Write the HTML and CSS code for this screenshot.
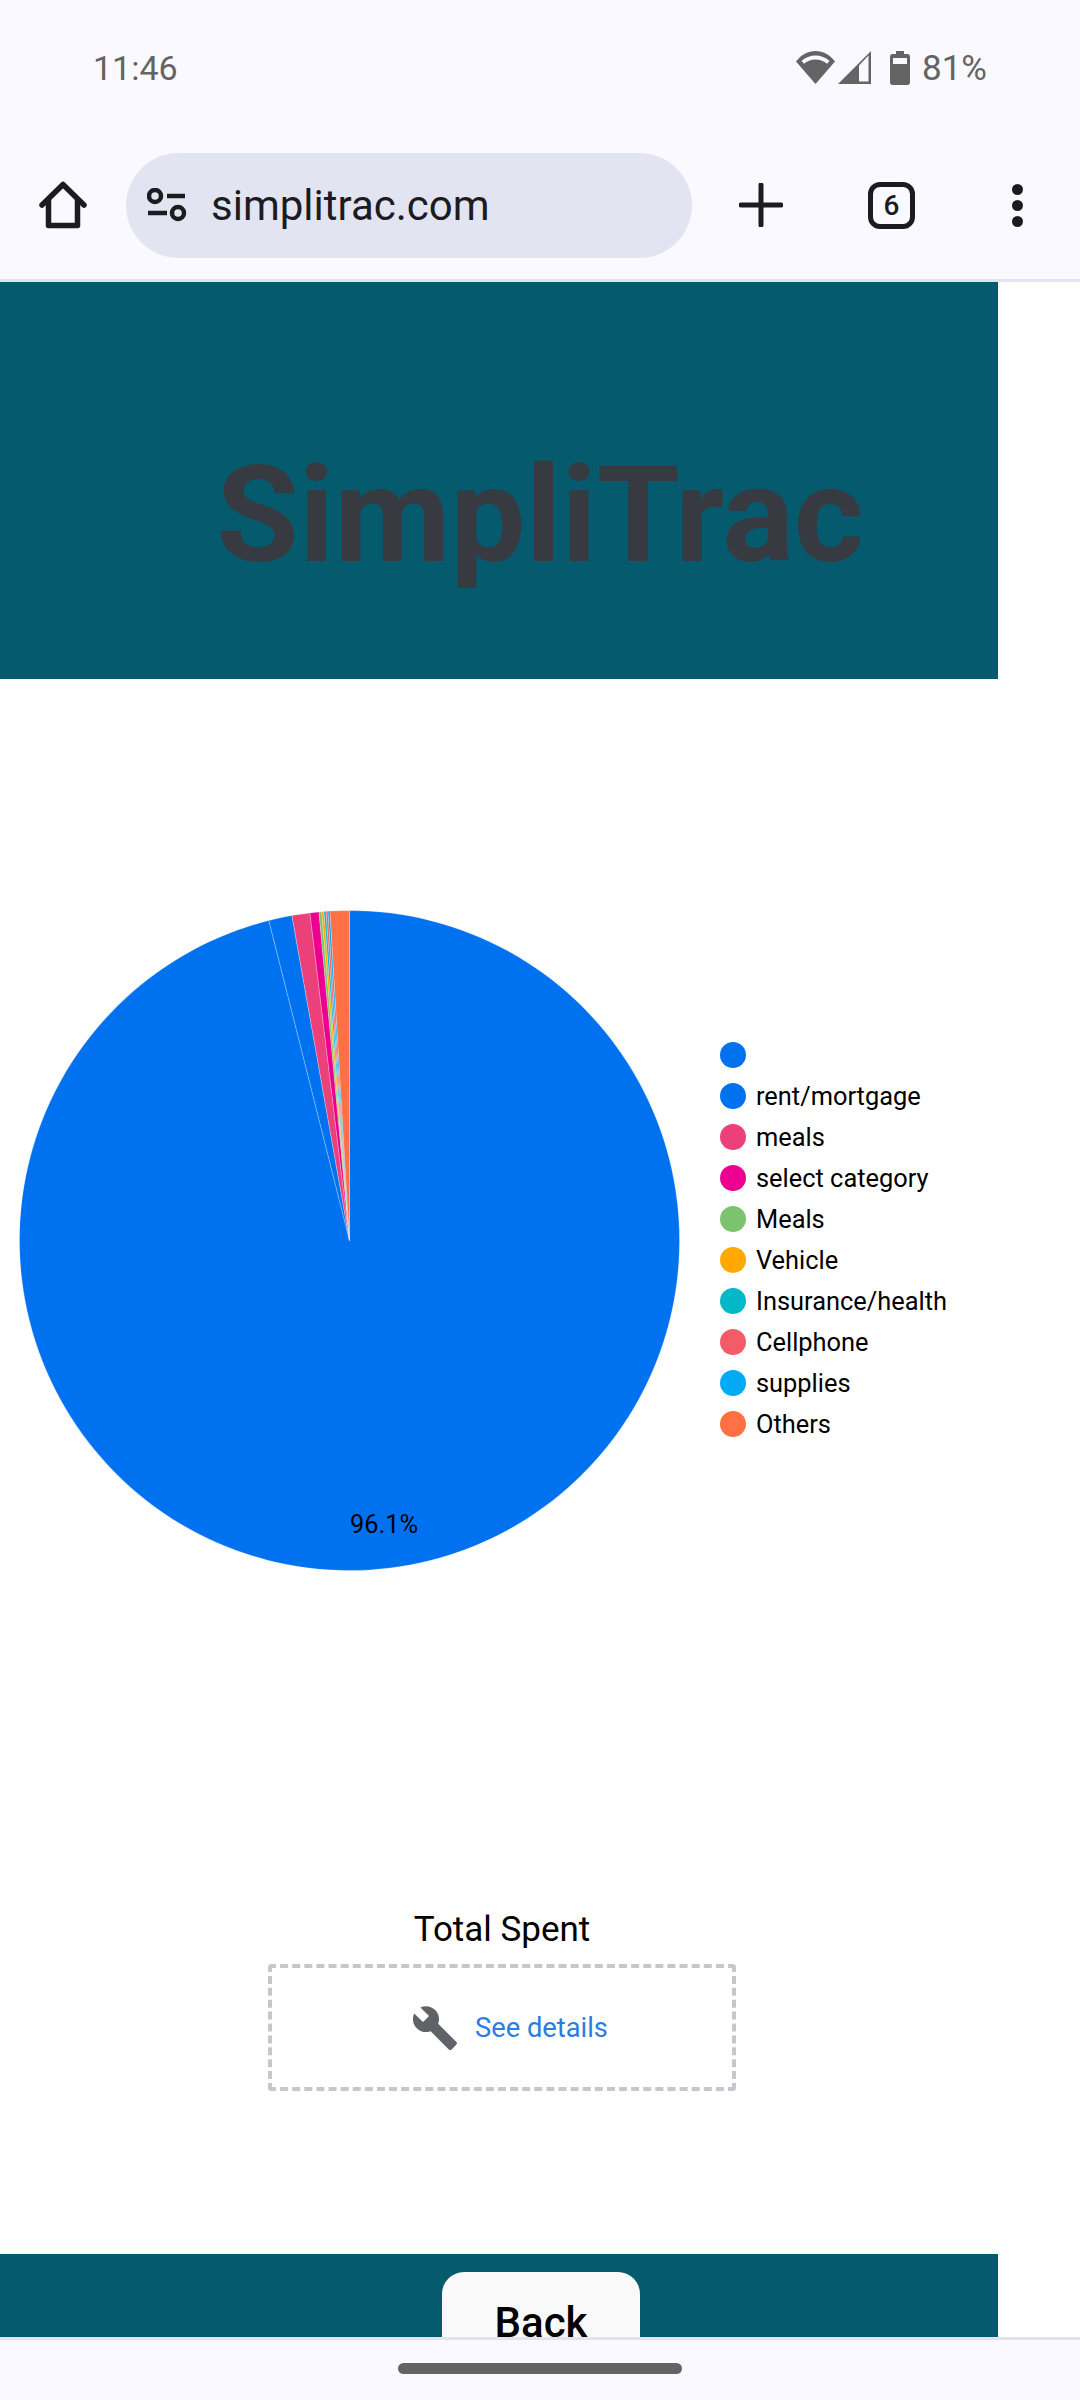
FILE: index.html
```html
<!DOCTYPE html>
<html lang="en">
<head>
    <meta charset="UTF-8">
    <meta name="viewport" content="width=device-width, initial-scale=1.0">
    <title>SimpliTrac</title>
    <link rel="stylesheet" href="styles.css">
</head>
<body>
    <div class="status-bar">
        <span class="clock">11:46</span>
        <div class="status-icons">
            <svg class="icon-wifi" viewBox="0 0 39 33" width="39" height="33">
                <path d="M19.5 33 0 10.5C5 4 12 0 19.5 0S34 4 39 10.5Z" fill="#646464"/>
                <path d="M5.5 10C9.5 6.6 14.3 4.6 19.5 4.6S29.500 6.600 33.500 10L31 12.800C28 10.200 24 8.500 19.500 8.500S11 10.200 8 12.800Z" fill="#f9f9ff"/>
            </svg>
            <svg class="icon-signal" viewBox="0 0 33 33" width="33" height="33">
                <path d="M33 0V33H0Z" fill="#646464"/>
                <path d="M21 14.500 30.500 4.500V30.500H21Z" fill="#f9f9ff"/>
            </svg>
            <svg class="icon-battery" viewBox="0 0 20 34" width="20" height="34">
                <path d="M6 0H14V3H17.500C19 3 20 4 20 5.500V31.500C20 33 19 34 17.500 34H2.500C1 34 0 33 0 31.500V5.500C0 4 1 3 2.500 3H6Z" fill="#646464"/>
                <rect x="3" y="7" width="14" height="6" fill="#f9f9ff"/>
            </svg>
            <span class="battery-level">81%</span>
        </div>
    </div>

    <div class="toolbar">
        <svg class="icon-home" viewBox="0 0 48 48" width="48" height="48" fill="none" stroke="#1c1b1f" stroke-width="5.500" stroke-linejoin="round" stroke-linecap="round">
            <path d="M3 24 24 3.500 45 24"/>
            <path d="M9.500 19V44.500H38.500V19"/>
        </svg>
        <div class="address-bar">
            <svg class="icon-tune" viewBox="0 0 40 34" width="40" height="34" fill="none" stroke="#1c1b1f" stroke-width="4.500">
                <circle cx="8" cy="8" r="6"/>
                <path d="M20 8H38"/>
                <path d="M1 25H20"/>
                <circle cx="31" cy="25" r="6"/>
            </svg>
            <span class="url">simplitrac.com</span>
        </div>
        <svg class="icon-plus" viewBox="0 0 44 44" width="44" height="44" fill="none" stroke="#1c1b1f" stroke-width="5" stroke-linecap="round">
            <path d="M22 2V42M2 22H42"/>
        </svg>
        <div class="tab-count">6</div>
        <div class="menu-dots"><i></i><i></i><i></i></div>
    </div>

    <main class="page">
        <header class="site-header">
            <h1>SimpliTrac</h1>
        </header>

        <section class="chart">
            <svg class="pie" viewBox="-330 -330 660 660" width="661" height="661">
                <g stroke="#fff" stroke-opacity="0.25" stroke-width="1">
                    <path d="M0 0 0 -329.500A329.500 329.500 0 1 1 -80.500 -319.510Z" fill="#0072f0"/>
                    <path d="M0 0 -80.500 -319.510A329.500 329.500 0 0 1 -57.500 -324.440Z" fill="#0072f0"/>
                    <path d="M0 0 -57.500 -324.440A329.500 329.500 0 0 1 -39.500 -327.120Z" fill="#ec407a"/>
                    <path d="M0 0 -39.500 -327.120A329.500 329.500 0 0 1 -30.500 -328.090Z" fill="#ec0090"/>
                    <path d="M0 0 -30.500 -328.090A329.500 329.500 0 0 1 -27.800 -328.330Z" fill="#7cc36e"/>
                    <path d="M0 0 -27.800 -328.330A329.500 329.500 0 0 1 -25.500 -328.510Z" fill="#ffa800"/>
                    <path d="M0 0 -25.500 -328.510A329.500 329.500 0 0 1 -23.500 -328.660Z" fill="#00b8c8"/>
                    <path d="M0 0 -23.500 -328.660A329.500 329.500 0 0 1 -21.500 -328.800Z" fill="#f45b69"/>
                    <path d="M0 0 -21.500 -328.800A329.500 329.500 0 0 1 -19.500 -328.920Z" fill="#00aaf5"/>
                    <path d="M0 0 -19.500 -328.920A329.500 329.500 0 0 1 0 -329.500Z" fill="#ff7043"/>
                </g>
                <text class="pie-label" x="34.500" y="292.500" text-anchor="middle">96.1%</text>
            </svg>
            <ul class="legend">
                <li><span class="dot dot-blue"></span></li>
                <li><span class="dot dot-blue"></span>rent/mortgage</li>
                <li><span class="dot dot-pink"></span>meals</li>
                <li><span class="dot dot-magenta"></span>select category</li>
                <li><span class="dot dot-green"></span>Meals</li>
                <li><span class="dot dot-amber"></span>Vehicle</li>
                <li><span class="dot dot-teal"></span>Insurance/health</li>
                <li><span class="dot dot-red"></span>Cellphone</li>
                <li><span class="dot dot-sky"></span>supplies</li>
                <li><span class="dot dot-orange"></span>Others</li>
            </ul>
        </section>

        <section class="total">
            <p class="total-title">Total Spent</p>
            <div class="total-box">
                <svg class="icon-wrench" viewBox="0 0 24 24" width="48" height="48">
                    <path d="M22.700 19l-9.100-9.100c.9-2.300.4-5-1.500-6.900-2-2-5-2.400-7.400-1.300L9 6 6 9 1.600 4.700C.4 7.100.9 10.100 2.900 12.100c1.900 1.900 4.600 2.400 6.900 1.500l9.100 9.100c.4.4 1 .4 1.400 0l2.300-2.300c.5-.4.5-1.100.1-1.400z" fill="#5f6368"/>
                </svg>
                <a href="#" class="details-link">See details</a>
            </div>
        </section>

        <footer class="site-footer">
            <button type="button" class="back-btn">Back</button>
        </footer>
    </main>

    <div class="nav-bar"><div class="nav-handle"></div></div>
</body>
</html>
```

FILE: styles.css
```css
body {
    margin: 0;
    width: 1080px;
    height: 2400px;
    overflow: hidden;
    font-family: Roboto, sans-serif;
    background-color: #fff;
    color: #000;
}

/* phone and browser chrome */
.status-bar {
    height: 100px;
    box-sizing: border-box;
    padding: 48px 93px 0 93px;
    display: flex;
    justify-content: space-between;
    align-items: flex-start;
    background-color: #f9f9ff;
    color: #646464;
    font-size: 34px;
    line-height: 40px;
}

.status-icons {
    display: flex;
    align-items: center;
    margin-top: -2px;
}

.icon-signal {
    margin-left: 3px;
}

.icon-battery {
    margin-left: 19px;
}

.battery-level {
    margin: 3px 0 0 12px;
    font-size: 35px;
}

.toolbar {
    height: 182px;
    box-sizing: border-box;
    padding-top: 31px;
    display: flex;
    align-items: center;
    background-color: #f9f9ff;
    border-bottom: 3px solid #e2e3ee;
}

.icon-home {
    margin-left: 39px;
}

.address-bar {
    width: 566px;
    height: 105px;
    margin-left: 39px;
    box-sizing: border-box;
    padding-left: 21px;
    display: flex;
    align-items: center;
    background-color: #e2e5f1;
    border-radius: 53px;
}

.url {
    margin-left: 24px;
    font-size: 42px;
    color: #1c1b1f;
}

.icon-plus {
    margin-left: 47px;
}

.tab-count {
    width: 47px;
    height: 47px;
    margin-left: 85px;
    box-sizing: border-box;
    display: flex;
    align-items: center;
    justify-content: center;
    border: 5px solid #1c1b1f;
    border-radius: 12px;
    font-size: 28px;
    font-weight: 500;
    color: #1c1b1f;
}

.menu-dots {
    margin-left: 97px;
    display: flex;
    flex-direction: column;
    gap: 5px;
}

.menu-dots i {
    display: block;
    width: 11px;
    height: 11px;
    border-radius: 50%;
    background-color: #1c1b1f;
}

.nav-bar {
    height: 63px;
    box-sizing: border-box;
    padding-top: 23px;
    background-color: #f9f9ff;
    border-top: 3px solid #e2e3ee;
}

.nav-handle {
    width: 284px;
    height: 11px;
    margin: 0 auto;
    border-radius: 6px;
    background-color: #646464;
}

/* page */
.page {
    height: 2055px;
    overflow: hidden;
}

.site-header {
    width: 998px;
    height: 397px;
    box-sizing: border-box;
    padding-top: 70px;
    display: flex;
    align-items: center;
    background-color: #065a6e;
}

.site-header h1 {
    flex: none;
    width: 1080px;
    margin: 0;
    text-align: center;
    font-size: 134px;
    font-weight: 700;
    color: #373a40;
}

.chart {
    padding: 231px 0 0 19px;
    display: flex;
    align-items: center;
}

.pie {
    flex: none;
}

.pie-label {
    font-size: 25.400px;
    fill: #000;
}

.legend {
    list-style: none;
    margin: -3px 0 0 40px;
    padding: 0;
    font-size: 25.400px;
}

.legend li {
    height: 41px;
    display: flex;
    align-items: center;
}

.dot {
    width: 26px;
    height: 26px;
    margin-right: 10px;
    border-radius: 50%;
}

.dot-blue { background-color: #0072f0; }
.dot-pink { background-color: #ec407a; }
.dot-magenta { background-color: #ec0090; }
.dot-green { background-color: #7cc36e; }
.dot-amber { background-color: #ffa800; }
.dot-teal { background-color: #00b8c8; }
.dot-red { background-color: #f45b69; }
.dot-sky { background-color: #00aaf5; }
.dot-orange { background-color: #ff7043; }

.total {
    width: 1004px;
    margin-top: 337px;
}

.total-title {
    margin: 0;
    height: 56px;
    line-height: 44px;
    text-align: center;
    font-size: 35px;
}

.total-box {
    width: 468px;
    height: 127px;
    margin: 0 auto;
    box-sizing: border-box;
    padding-left: 15px;
    display: flex;
    align-items: center;
    justify-content: center;
    gap: 16px;
    border: 4px dashed #c5c7cc;
    border-radius: 4px;
}

.details-link {
    font-size: 27.300px;
    color: #2a7de1;
    text-decoration: none;
}

.site-footer {
    width: 998px;
    margin-top: 163px;
    height: 120px;
    padding-top: 18px;
    box-sizing: border-box;
    background-color: #065a6e;
}

.back-btn {
    display: block;
    width: 198px;
    height: 120px;
    margin-left: 442px;
    padding: 0 0 20px 0;
    border: none;
    border-radius: 22px;
    background-color: #f9f9f9;
    font-family: Roboto, sans-serif;
    font-size: 42px;
    font-weight: 500;
    color: #000;
}
```
